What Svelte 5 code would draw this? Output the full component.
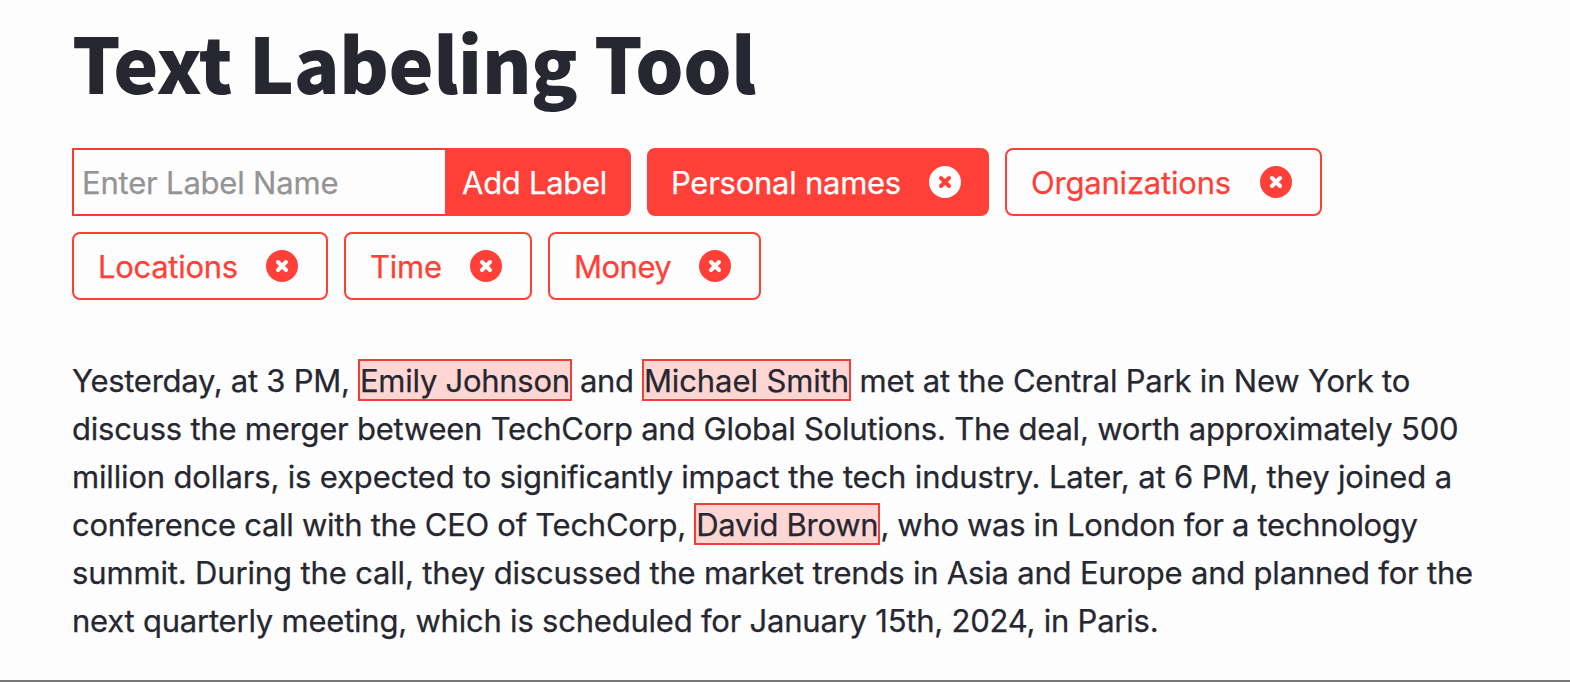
<script>
  let labels = $state([
    { name: 'Personal names', width: 342, active: true, ls: -0.26 },
    { name: 'Organizations', width: 317, ls: -0.2 },
    { name: 'Locations', width: 256, ls: -0.3 },
    { name: 'Time', width: 188, ls: -0.2 },
    { name: 'Money', width: 213, ls: -0.5 }
  ]);
  const lines = [
    [
      { t: 'Yesterday, at 3 PM, ', ls: -0.27 },
      { t: 'Emily Johnson', ls: -0.27, mark: true },
      { t: ' and ', ls: -0.4 },
      { t: 'Michael Smith', ls: -0.1, mark: true },
      { t: ' met at the Central Park in New York to', ls: -0.2 }
    ],
    [
      { t: 'discuss the merger between ', ls: -0.24 },
      { t: 'TechCorp and Global Solutions. ', ls: -0.25 },
      { t: 'The deal, worth approximately 500', ls: -0.2 }
    ],
    [
      { t: 'million dollars, is expected to ', ls: -0.16 },
      { t: 'significantly ', ls: -0.28 },
      { t: 'impact the tech industry. ', ls: -0.14 },
      { t: 'Later, at 6 PM, they joined a', ls: -0.14 }
    ],
    [
      { t: 'conference call with the CEO of TechCorp, ', ls: -0.28 },
      { t: 'David Brown', ls: -0.27, mark: true },
      { t: ', who was in London for a technology', ls: -0.33 }
    ],
    [
      { t: 'summit. During the call, they discussed ', ls: -0.15 },
      { t: 'the market trends in Asia and Europe and planned for the', ls: -0.2 }
    ],
    [{ t: 'next quarterly meeting, which is scheduled for January 15th, 2024, in Paris.', ls: -0.22 }]
  ];
</script>

<main>
  <h1>Text Labeling Tool</h1>
  <div class="labels">
    <div class="entry">
      <input placeholder="Enter Label Name" />
      <button>Add Label</button>
    </div>
    {#each labels as l}
      <div class="label" class:active={l.active} style="width:{l.width}px">
        <span style="letter-spacing:{l.ls}px">{l.name}</span>
        <svg viewBox="0 0 32 32" width="32" height="32">
          <circle cx="16" cy="16" r="16" />
          <path d="M12 12L20 20M20 12L12 20" />
        </svg>
      </div>
    {/each}
  </div>
  <div class="text">
    {#each lines as line}
      <div class="line">{#each line as p}{#if p.mark}<mark style="letter-spacing:{p.ls}px">{p.t}</mark>{:else}<span style="letter-spacing:{p.ls}px">{p.t}</span>{/if}{/each}</div>
    {/each}
  </div>
</main>

<style>
  :global(body) { background: #fdfdfd; }
  main {
    box-sizing: border-box;
    height: 682px;
    padding: 0 72px;
    border-bottom: 2px solid #777;
    color: #262730;
    font-family: Inter, sans-serif;
    font-size: 31px;
    -webkit-text-stroke: 0.25px currentColor;
    overflow: hidden;
  }
  h1 {
    margin: 0;
    height: 148px;
    font: 900 76px/122px "Noto Sans CJK SC", sans-serif;
    letter-spacing: -0.6px;
    white-space: nowrap;
    -webkit-text-stroke: 0;
  }
  .labels { display: flex; flex-wrap: wrap; gap: 16px; height: 152px; }
  .entry { display: flex; height: 68px; }
  input, button { box-sizing: border-box; margin: 0; font: inherit; height: 68px; }
  input {
    width: 373px;
    padding: 0 8px;
    border: 2px solid #ff3b30;
    border-right: 0;
    border-radius: 0;
    background: #fdfdfd;
    outline: none;
    letter-spacing: -0.2px;
  }
  input::placeholder { color: #949494; opacity: 1; }
  button {
    width: 186px;
    padding: 0 7px 0 0;
    border: 0;
    border-radius: 0 8px 8px 0;
    background: #ff4038;
    color: #fff;
    letter-spacing: -0.3px;
  }
  .label {
    box-sizing: border-box;
    display: flex;
    align-items: center;
    justify-content: space-between;
    height: 68px;
    padding: 0 28px 0 24px;
    border: 2px solid #ff4038;
    border-radius: 8px;
    color: #ff4038;
    white-space: nowrap;
  }
  .label.active { background: #ff4038; color: #fff; padding: 0 26px 0 22px; }
  circle { fill: #ff4038; }
  path { stroke: #fff; stroke-width: 4; stroke-linecap: round; fill: none; }
  .active circle { fill: #fff; }
  .active path { stroke: #ff4038; }
  .text { padding-top: 57px; }
  .line { height: 48px; line-height: 48px; white-space: pre; }
  mark {
    color: inherit;
    background: #ffd6d3;
    border: 2px solid #f04038;
    padding: 1px 0 0;
  }
</style>
